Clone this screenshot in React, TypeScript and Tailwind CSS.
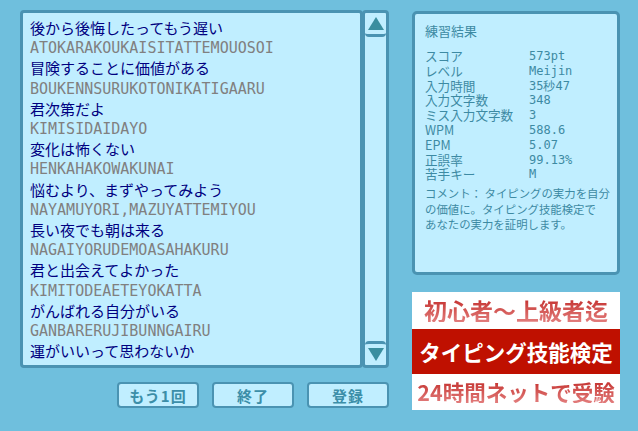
import React from "react";

const lines: { jp: string; ro?: string }[] = [
  { jp: "後から後悔したってもう遅い", ro: "ATOKARAKOUKAISITATTEMOUOSOI" },
  { jp: "冒険することに価値がある", ro: "BOUKENNSURUKOTONIKATIGAARU" },
  { jp: "君次第だよ", ro: "KIMISIDAIDAYO" },
  { jp: "変化は怖くない", ro: "HENKAHAKOWAKUNAI" },
  { jp: "悩むより、まずやってみよう", ro: "NAYAMUYORI,MAZUYATTEMIYOU" },
  { jp: "長い夜でも朝は来る", ro: "NAGAIYORUDEMOASAHAKURU" },
  { jp: "君と出会えてよかった", ro: "KIMITODEAETEYOKATTA" },
  { jp: "がんばれる自分がいる", ro: "GANBARERUJIBUNNGAIRU" },
  { jp: "運がいいって思わないか" },
];

const stats: [string, string][] = [
  ["スコア", "573pt"],
  ["レベル", "Meijin"],
  ["入力時間", "35秒47"],
  ["入力文字数", "348"],
  ["ミス入力文字数", "3"],
  ["WPM", "588.6"],
  ["EPM", "5.07"],
  ["正誤率", "99.13%"],
  ["苦手キー", "M"],
];

const jpFont = "font-['Noto_Sans_CJK_JP','Noto_Sans',sans-serif]";
const monoFont = "font-['DejaVu_Sans_Mono','Liberation_Mono',monospace]";

function Btn({ label }: { label: string }) {
  return (
    <button
      className={`w-[82px] h-[26px] rounded-[4px] border-2 border-[#4a93b2] bg-[#c0eeff] text-[#3c8ea8] text-[15px] font-bold leading-none tracking-[1px] ${jpFont}`}
    >
      {label}
    </button>
  );
}

export default function App() {
  return (
    <div className="flex w-[638px] h-[431px] bg-[#6fbfdd] overflow-hidden">
      {/* left: typed sentences + scroll + actions */}
      <div className="ml-[20px] mt-[10px] w-[370px] flex flex-col">
        <div className="flex h-[358px]">
          <div className="w-[343px] h-full rounded-[4px] border-[3px] border-[#4a93b2] bg-[#c0eeff] overflow-hidden pl-[7px] pt-[5px]">
            {lines.map((l, i) => (
              <div key={i}>
                <div className={`text-[15px] leading-[20.2px] text-[#000080] ${jpFont}`}>{l.jp}</div>
                {l.ro && (
                  <div className={`text-[15px] leading-[20.2px] text-[#808080] whitespace-nowrap ${monoFont}`}>{l.ro}</div>
                )}
              </div>
            ))}
          </div>
          <div className="w-[27px] h-full rounded-[4px] border-[3px] border-[#4a93b2] bg-[#c0eeff] flex flex-col -ml-[1px]">
            <div className="h-[24px] border-b-[3px] border-[#4a93b2] rounded-b-[4px] flex items-center justify-center">
              <svg width="16" height="13" viewBox="0 0 16 13">
                <polygon points="8,0 16,13 0,13" fill="#3a8e9f" />
              </svg>
            </div>
            <div className="flex-1" />
            <div className="h-[24px] border-t-[3px] border-[#4a93b2] rounded-t-[4px] flex items-center justify-center">
              <svg width="16" height="13" viewBox="0 0 16 13">
                <polygon points="0,0 16,0 8,13" fill="#3a8e9f" />
              </svg>
            </div>
          </div>
        </div>
        <div className="flex justify-end gap-[13px] mt-[14px] pr-[1px]">
          <Btn label="もう1回" />
          <Btn label="終了" />
          <Btn label="登録" />
        </div>
      </div>

      {/* right: result card + banner */}
      <div className="ml-[22px] mt-[11px] w-[208px] flex flex-col">
        <div className="h-[264px] rounded-[5px] border-[3px] border-[#4a93b2] bg-[#c0eeff] pl-[10px] pr-[4px] pt-[9px] text-[#3d8aa3]">
          <div className={`text-[13px] leading-[16px] ${jpFont}`}>練習結果</div>
          <div className="mt-[10px]">
            {stats.map(([k, v]) => (
              <div key={k} className="flex h-[14.8px] items-center">
                <span className={`w-[104px] text-[12.6px] leading-[14.8px] ${jpFont}`}>{k}</span>
                <span className={`text-[12px] leading-[14.8px] ${monoFont}`}>{v}</span>
              </div>
            ))}
          </div>
          <p className={`mt-[4px] text-[11.4px] leading-[15.5px] whitespace-nowrap ${jpFont}`}>
            コメント： タイピングの実力を自分
            <br />
            の価値に。タイピング技能検定で
            <br />
            あなたの実力を証明します。
          </p>
        </div>

        <div className={`mt-[17px] h-[118px] flex flex-col font-bold ${jpFont}`}>
          <div className="h-[37px] bg-white flex items-center justify-center">
            <span className="text-[23px] leading-none bg-gradient-to-b from-[#c42e2e] to-[#e27c7c] bg-clip-text text-transparent">
              初心者～上級者迄
            </span>
          </div>
          <div className="h-[45px] bg-[#bf1000] flex items-center justify-center">
            <span className="text-[21.5px] leading-none text-white">タイピング技能検定</span>
          </div>
          <div className="h-[36px] bg-white flex items-center justify-center">
            <span className="text-[21.5px] leading-none bg-gradient-to-b from-[#c42e2e] to-[#e27c7c] bg-clip-text text-transparent">
              24時間ネットで受験
            </span>
          </div>
        </div>
      </div>
    </div>
  );
}
